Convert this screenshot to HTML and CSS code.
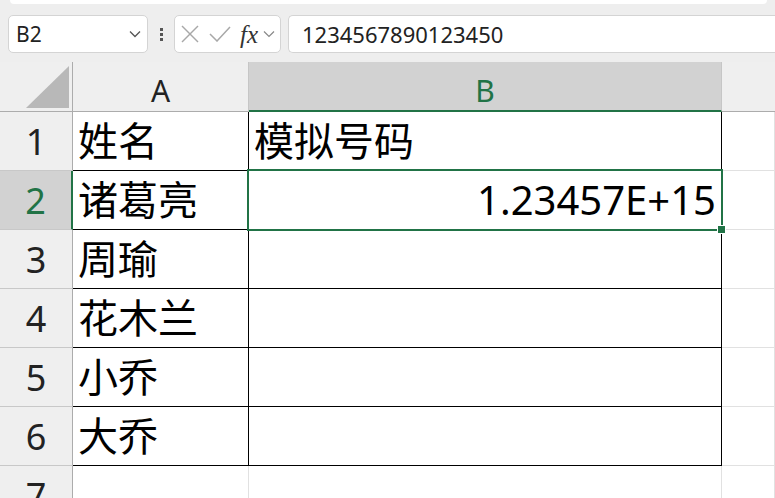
FILE: index.html
```html
<!DOCTYPE html>
<html lang="zh-CN">
<head>
<meta charset="utf-8">
<title>Sheet</title>
<link rel="stylesheet" href="styles.css">
</head>
<body>
<div class="topstrip"></div>
<div class="toolbar">
  <div class="namebox">
    <span class="nb-text">B2</span>
    <svg class="chev" width="12" height="8" viewBox="0 0 12 8"><polyline points="1,1.5 6,6.5 11,1.5" fill="none" stroke="#555" stroke-width="1.3"/></svg>
  </div>
  <div class="dots"><i></i><i></i><i></i></div>
  <div class="fbtns">
    <svg class="ico-x" width="18" height="18" viewBox="0 0 18 18"><line x1="1" y1="1" x2="17" y2="17" stroke="#a8a8a8" stroke-width="1.5"/><line x1="17" y1="1" x2="1" y2="17" stroke="#a8a8a8" stroke-width="1.5"/></svg>
    <svg class="ico-ok" width="22" height="16" viewBox="0 0 22 16"><polyline points="1,8 8,15 21,1" fill="none" stroke="#a8a8a8" stroke-width="1.5"/></svg>
    <span class="fx">fx</span>
    <svg class="chev2" width="12" height="8" viewBox="0 0 12 8"><polyline points="1,1.5 6,6.5 11,1.5" fill="none" stroke="#888" stroke-width="1.2"/></svg>
  </div>
  <div class="finput">1234567890123450</div>
</div>
<div class="sheet">
  <div class="c hdr corner"><svg width="43" height="42" viewBox="0 0 43 42"><polygon points="43,0 43,42 0,42" fill="#b8b8b8"/></svg></div>
  <div class="c hdr col">A</div>
  <div class="c hdr col sel">B</div>
  <div class="c hdr col last"></div>

  <div class="c rh">1</div>
  <div class="c d">姓名</div>
  <div class="c d">模拟号码</div>
  <div class="c g"></div>

  <div class="c rh rsel">2</div>
  <div class="c d">诸葛亮</div>
  <div class="c d num active"><span>1.23457E+15</span><b class="selbox"></b><b class="handle"></b></div>
  <div class="c g"></div>

  <div class="c rh">3</div>
  <div class="c d">周瑜</div>
  <div class="c d"></div>
  <div class="c g"></div>

  <div class="c rh">4</div>
  <div class="c d">花木兰</div>
  <div class="c d"></div>
  <div class="c g"></div>

  <div class="c rh">5</div>
  <div class="c d">小乔</div>
  <div class="c d"></div>
  <div class="c g"></div>

  <div class="c rh">6</div>
  <div class="c d">大乔</div>
  <div class="c d"></div>
  <div class="c g"></div>

  <div class="c rh">7</div>
  <div class="c g"></div>
  <div class="c g"></div>
  <div class="c g"></div>
</div>
</body>
</html>
```
FILE: styles.css
```css
html, body {
  margin: 0;
  padding: 0;
}
body {
  width: 775px;
  height: 498px;
  overflow: hidden;
  background: #eeeeee;
  font-family: "Noto Sans", "Noto Sans CJK SC", sans-serif;
  color: #000;
}
.topstrip {
  height: 4px;
  margin: 0 8px 0 10px;
  background: #ffffff;
  border-radius: 0 0 6px 6px;
}
.toolbar {
  display: flex;
  align-items: stretch;
  height: 38px;
  padding: 11px 0 9px 8px;
}
.namebox {
  width: 140px;
  box-sizing: border-box;
  background: #fff;
  border: 1px solid #d4d4d4;
  border-radius: 5px;
  display: flex;
  align-items: center;
  justify-content: space-between;
  padding: 0 6px 0 7px;
}
.nb-text {
  font-size: 21px;
  color: #222;
}
.dots {
  width: 26px;
  display: flex;
  flex-direction: column;
  align-items: center;
  justify-content: center;
  gap: 2px;
}
.dots i {
  display: block;
  width: 3px;
  height: 3px;
  background: #555;
}
.fbtns {
  width: 107px;
  box-sizing: border-box;
  background: #fff;
  border: 1px solid #d4d4d4;
  border-radius: 5px;
  display: flex;
  align-items: center;
  padding-left: 6px;
}
.ico-x { margin-right: 10px; }
.ico-ok { margin-right: 9px; }
.fx {
  font-family: "Liberation Serif", "DejaVu Serif", serif;
  font-style: italic;
  font-size: 25px;
  color: #333;
  margin-right: 5px;
  line-height: 1;
}
.finput {
  flex: 1;
  margin-left: 7px;
  margin-right: -10px;
  background: #fff;
  border: 1px solid #d4d4d4;
  border-right: none;
  border-radius: 5px 0 0 5px;
  display: flex;
  align-items: center;
  padding-left: 13px;
  font-size: 22px;
  color: #222;
}
.sheet {
  display: grid;
  grid-template-columns: 73px 176px 473px 1fr;
  grid-template-rows: 50px repeat(7, 59px);
  background: #fff;
}
.c {
  box-sizing: border-box;
  border-right: 1px solid #e1e1e1;
  border-bottom: 1px solid #e1e1e1;
  display: flex;
  align-items: center;
  min-width: 0;
}
.hdr {
  background: #efefef;
  border-right-color: #c6c6c6;
  border-bottom-color: #acacac;
}
.corner {
  justify-content: flex-end;
  align-items: flex-end;
  padding: 0 3px 3px 0;
  border-right-color: #acacac;
}
.corner svg { display: block; }
.col {
  justify-content: center;
  align-items: flex-end;
  font-size: 30px;
  line-height: 1;
  padding-bottom: 5px;
  color: #222;
}
.col.sel {
  background: #d2d2d2;
  color: #217346;
  border-bottom: 2px solid #217346;
  padding-bottom: 4px;
}
.col.last { border-right: none; }
.rh {
  background: #efefef;
  border-right-color: #acacac;
  border-bottom-color: #c8c8c8;
  justify-content: center;
  font-size: 36px;
  line-height: 1;
  color: #222;
  padding-top: 2px;
}
.rh.rsel {
  background: #d2d2d2;
  color: #217346;
  border-right: 2px solid #217346;
}
.d {
  border-right-color: #000;
  border-bottom-color: #000;
  font-size: 40px;
  line-height: 48px;
  padding-left: 5px;
  white-space: nowrap;
}
.num {
  justify-content: flex-end;
  padding-right: 5px;
}
.active { position: relative; }
.selbox {
  position: absolute;
  left: -2px;
  top: -2px;
  width: 476px;
  height: 62px;
  box-sizing: border-box;
  border: 2px solid #217346;
}
.handle {
  position: absolute;
  left: 469px;
  top: 55px;
  width: 7px;
  height: 7px;
  box-sizing: border-box;
  background: #217346;
  outline: 1px solid #fff;
}
```
